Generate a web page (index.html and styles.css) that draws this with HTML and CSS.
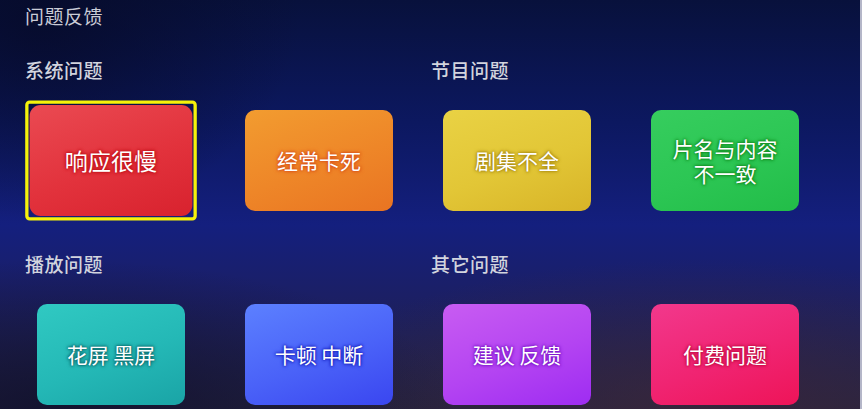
FILE: index.html
```html
<!DOCTYPE html>
<html lang="zh-CN">
<head>
<meta charset="utf-8">
<title>问题反馈</title>
<link rel="stylesheet" href="styles.css">
</head>
<body>
<div class="page">
  <div class="title">问题反馈</div>
  <div class="sections">
    <section class="section">
      <h2 class="section-title">系统问题</h2>
      <div class="cards">
        <div class="card red focused"><span>响应很慢</span></div>
        <div class="card orange"><span>经常卡死</span></div>
      </div>
    </section>
    <section class="section">
      <h2 class="section-title">节目问题</h2>
      <div class="cards">
        <div class="card yellow"><span>剧集不全</span></div>
        <div class="card green"><span>片名与内容<br>不一致</span></div>
      </div>
    </section>
    <section class="section">
      <h2 class="section-title">播放问题</h2>
      <div class="cards">
        <div class="card teal"><span>花屏 黑屏</span></div>
        <div class="card blue"><span>卡顿 中断</span></div>
      </div>
    </section>
    <section class="section">
      <h2 class="section-title">其它问题</h2>
      <div class="cards">
        <div class="card purple"><span>建议 反馈</span></div>
        <div class="card pink"><span>付费问题</span></div>
      </div>
    </section>
  </div>
</div>
</body>
</html>
```
FILE: styles.css
```css
* { box-sizing: border-box; }
html, body { margin: 0; padding: 0; }
body {
  width: 862px;
  height: 409px;
  overflow: hidden;
  font-family: "Noto Sans CJK SC", "Noto Sans", sans-serif;
}
.page {
  width: 862px;
  height: 409px;
  padding-left: 25px;
  border-right: 2px solid #b4b6c8;
  background:
    radial-gradient(ellipse 420px 150px at 700px 409px, rgba(62, 40, 58, 0.7), rgba(62, 40, 58, 0) 100%),
    radial-gradient(ellipse 400px 150px at 60px 409px, rgba(16, 16, 44, 0.85), rgba(16, 16, 44, 0) 100%),
    radial-gradient(ellipse 260px 200px at 40px 20px, rgba(6, 10, 40, 0.8), rgba(6, 10, 40, 0) 100%),
    linear-gradient(180deg, #08113c 0%, #0c1860 30%, #141f7e 55%, #1b1f66 72%, #24223f 100%);
}
.title {
  color: #c9cbd6;
  font-size: 19px;
  line-height: 32px;
  height: 32px;
  letter-spacing: 0.5px;
}
.sections {
  margin-top: 24px;
  display: grid;
  grid-template-columns: 406px 406px;
  row-gap: 39px;
}
.section-title {
  margin: 0 0 26px;
  color: #d2d4de;
  font-size: 19px;
  font-weight: 500;
  line-height: 28px;
  letter-spacing: 0.5px;
}
.cards {
  display: flex;
  gap: 60px;
  padding-left: 12px;
}
.card {
  position: relative;
  width: 148px;
  height: 101px;
  border-radius: 10px;
  display: flex;
  align-items: center;
  justify-content: center;
  text-align: center;
  color: #ffffff;
  font-size: 21px;
  line-height: 25px;
}
.card span { display: block; }
.focused {
  transform: scale(1.1);
}
.focused::after {
  content: "";
  position: absolute;
  inset: -4px;
  border: 3px solid #f6f20a;
  border-radius: 4px;
}
.red { background: linear-gradient(160deg, #ea4a52 0%, #e2323c 55%, #d8222e 100%); text-shadow: 0 0 2px #c01018, 0 0 3px #c01018, 0 0 4px #c01018; }
.orange { background: linear-gradient(160deg, #f29c30 0%, #ee8628 55%, #e97422 100%); text-shadow: 0 0 2px #d8501a, 0 0 3px #d8501a, 0 0 4px #d8501a; }
.yellow { background: linear-gradient(160deg, #e9d244 0%, #e2c636 55%, #d8b428 100%); text-shadow: 0 0 2px #a88a10, 0 0 3px #a88a10, 0 0 4px #a88a10; }
.green { background: linear-gradient(160deg, #36cd5e 0%, #2cc654 55%, #22bd48 100%); text-shadow: 0 0 2px #11891e, 0 0 3px #11891e, 0 0 4px #11891e; }
.teal { background: linear-gradient(160deg, #30c9c2 0%, #24b8b6 55%, #1aa4a6 100%); text-shadow: 0 0 2px #0a6a6c, 0 0 3px #0a6a6c, 0 0 4px #0a6a6c; }
.blue { background: linear-gradient(160deg, #5c80ff 0%, #4a62f8 55%, #3a46f0 100%); text-shadow: 0 0 2px #1a22c0, 0 0 3px #1a22c0, 0 0 4px #1a22c0; }
.purple { background: linear-gradient(160deg, #c85cf2 0%, #b444f2 55%, #9e2cf2 100%); text-shadow: 0 0 2px #7a14c8, 0 0 3px #7a14c8, 0 0 4px #7a14c8; }
.pink { background: linear-gradient(160deg, #f2388c 0%, #f02472 55%, #ee1458 100%); text-shadow: 0 0 2px #c00a40, 0 0 3px #c00a40, 0 0 4px #c00a40; }
```
